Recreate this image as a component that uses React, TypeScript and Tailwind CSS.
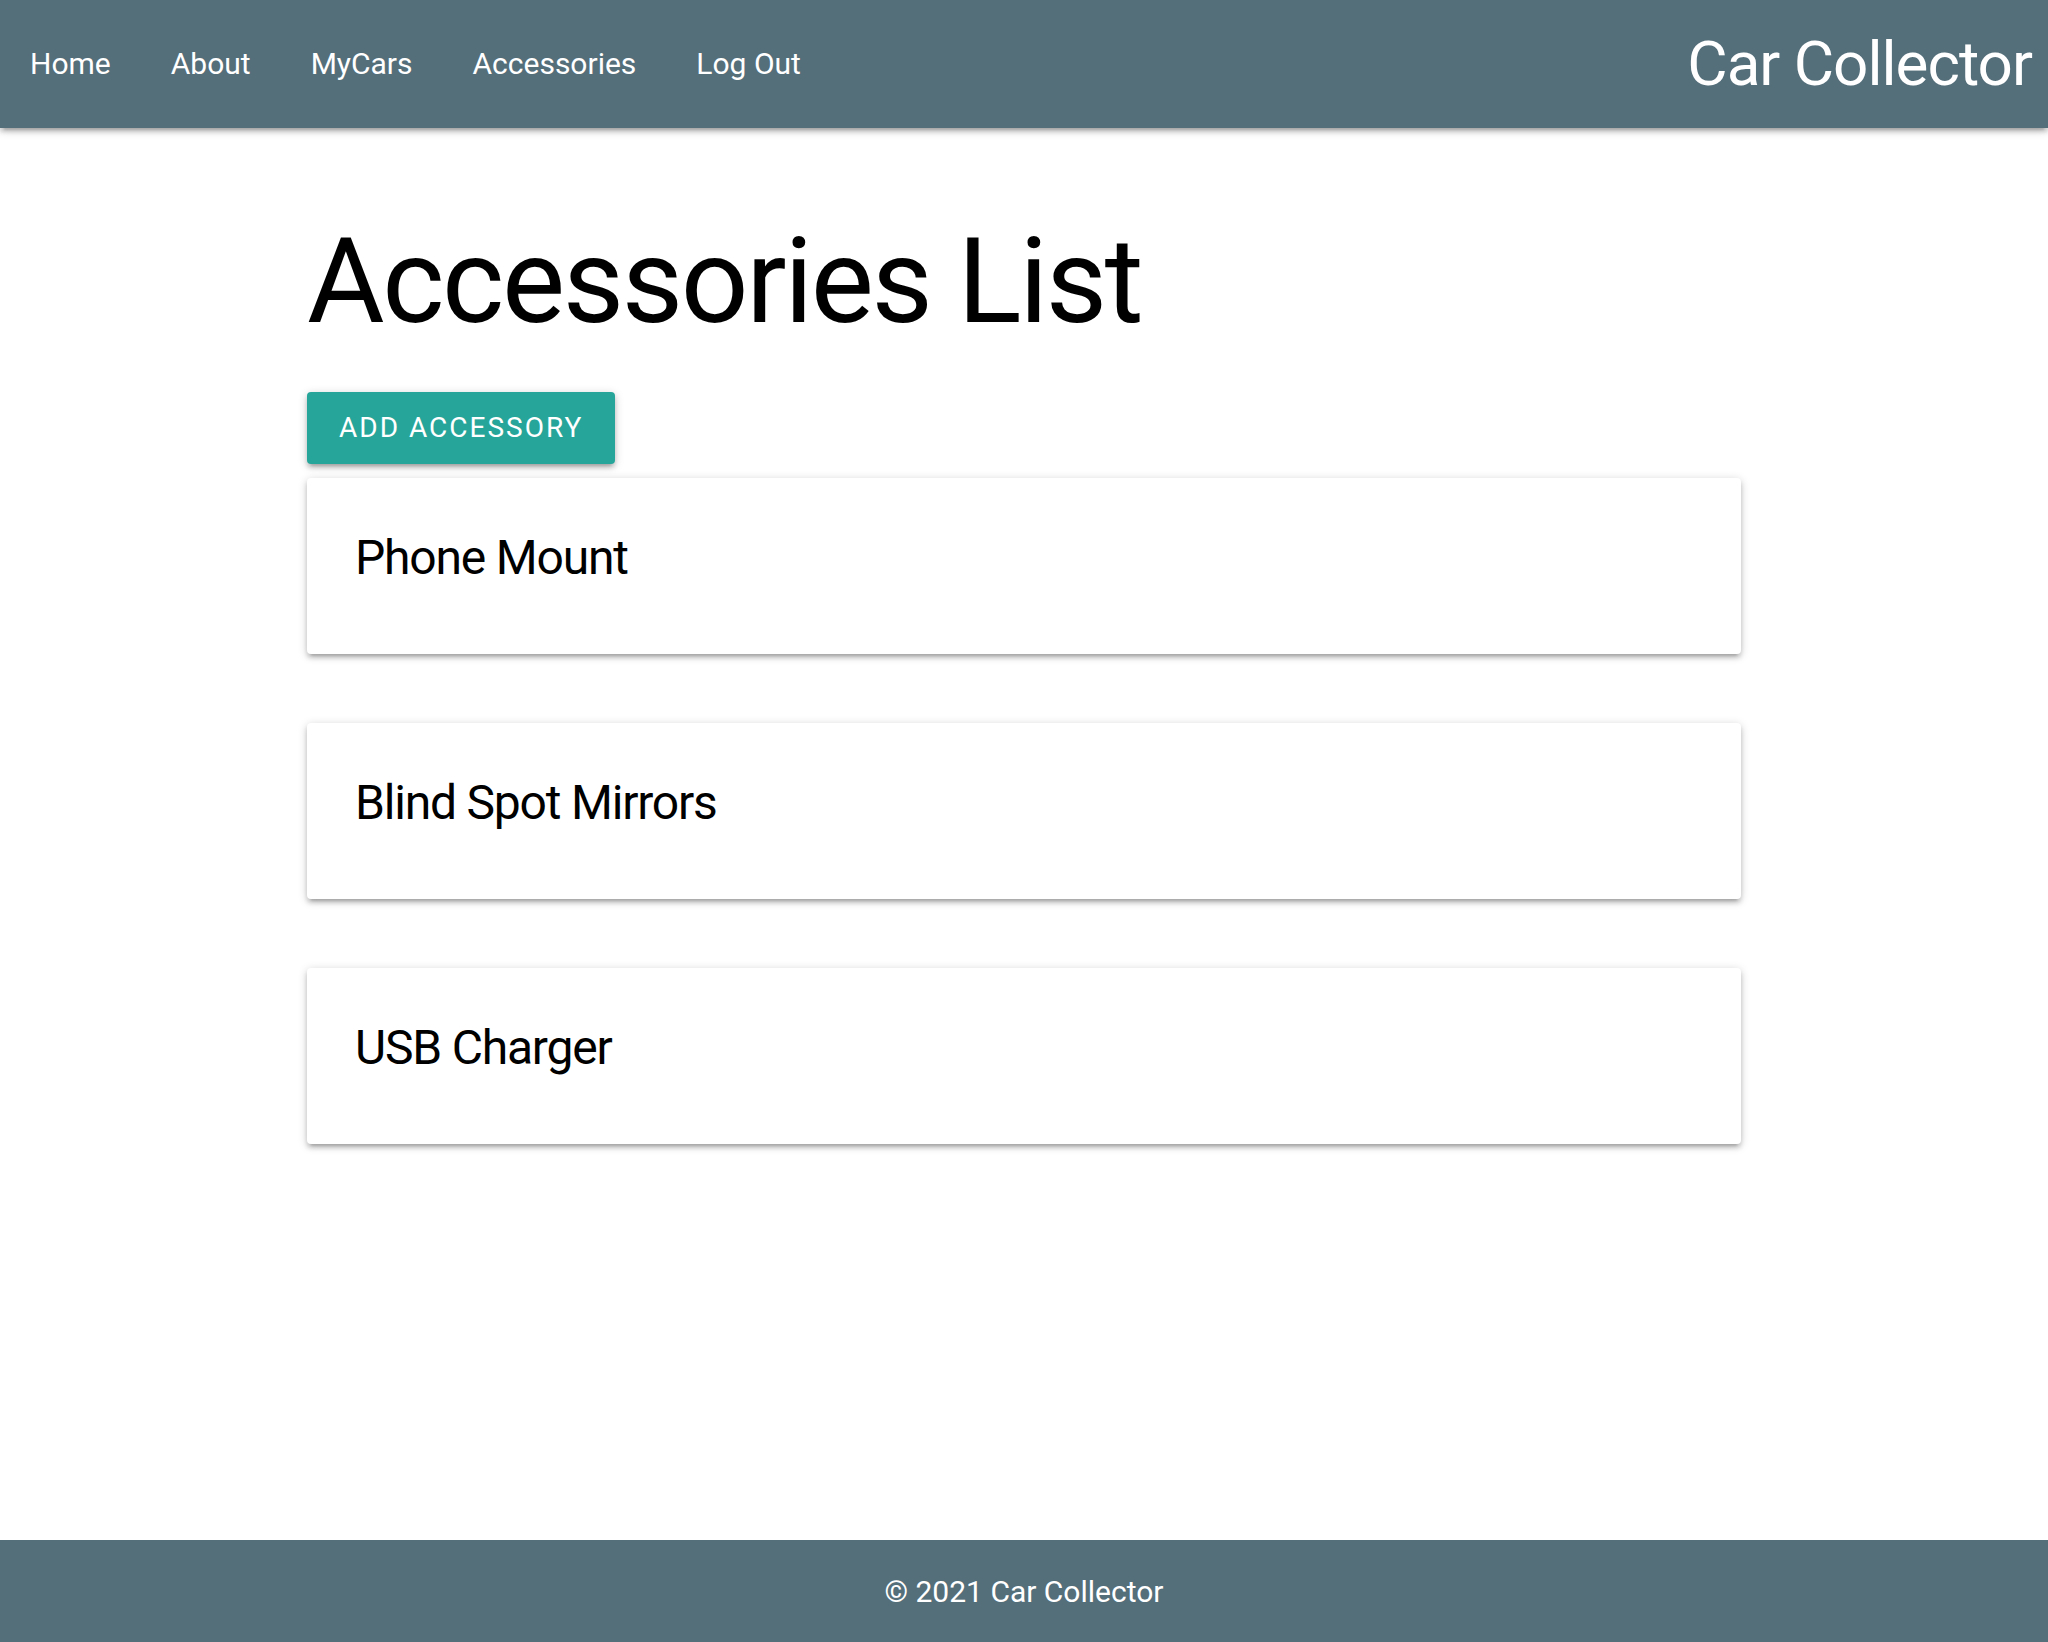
import React from "react";

const shadow =
  "shadow-[0_4px_4px_0_rgba(0,0,0,0.14),0_6px_2px_-4px_rgba(0,0,0,0.12),0_2px_10px_0_rgba(0,0,0,0.2)]";

const items = ["Phone Mount", "Blind Spot Mirrors", "USB Charger"];

export default function App() {
  return (
    <div
      className="min-h-screen flex flex-col bg-white text-black"
      style={{ fontFamily: "Roboto, 'Noto Sans', sans-serif" }}
    >
      <nav
        className={`relative z-10 h-[128px] bg-[#546e7a] text-white flex items-center justify-between ${shadow}`}
      >
        <ul className="flex items-center h-full pl-0">
          {["Home", "About", "MyCars", "Accessories", "Log Out"].map((l) => (
            <li key={l} className="px-[30px] text-[30px] leading-[128px]">
              {l}
            </li>
          ))}
        </ul>
        <div className="pr-[16px] text-[62px] leading-[128px] tracking-[-1px]">Car Collector</div>
      </nav>

      <main className="flex-1 w-[1434px] mx-auto">
        <h1 className="text-[119px] leading-[131px] mt-[88px] mb-[45px] tracking-[-2.4px]">
          Accessories List
        </h1>
        <button
          className={`h-[72px] px-[32px] rounded-[4px] bg-[#26a69a] text-white text-[28px] tracking-[2px] uppercase ${shadow}`}
        >
          Add Accessory
        </button>
        <div className="mt-[14px] flex flex-col gap-[69px]">
          {items.map((it) => (
            <div key={it} className={`bg-white rounded-[4px] p-[48px] ${shadow}`}>
              <div className="text-[48px] leading-[64px] mb-[16px] tracking-[-1.2px]">{it}</div>
            </div>
          ))}
        </div>
      </main>

      <footer className="h-[102px] bg-[#546e7a] text-white flex items-center justify-center text-[30px]">
        © 2021 Car Collector
      </footer>
    </div>
  );
}
